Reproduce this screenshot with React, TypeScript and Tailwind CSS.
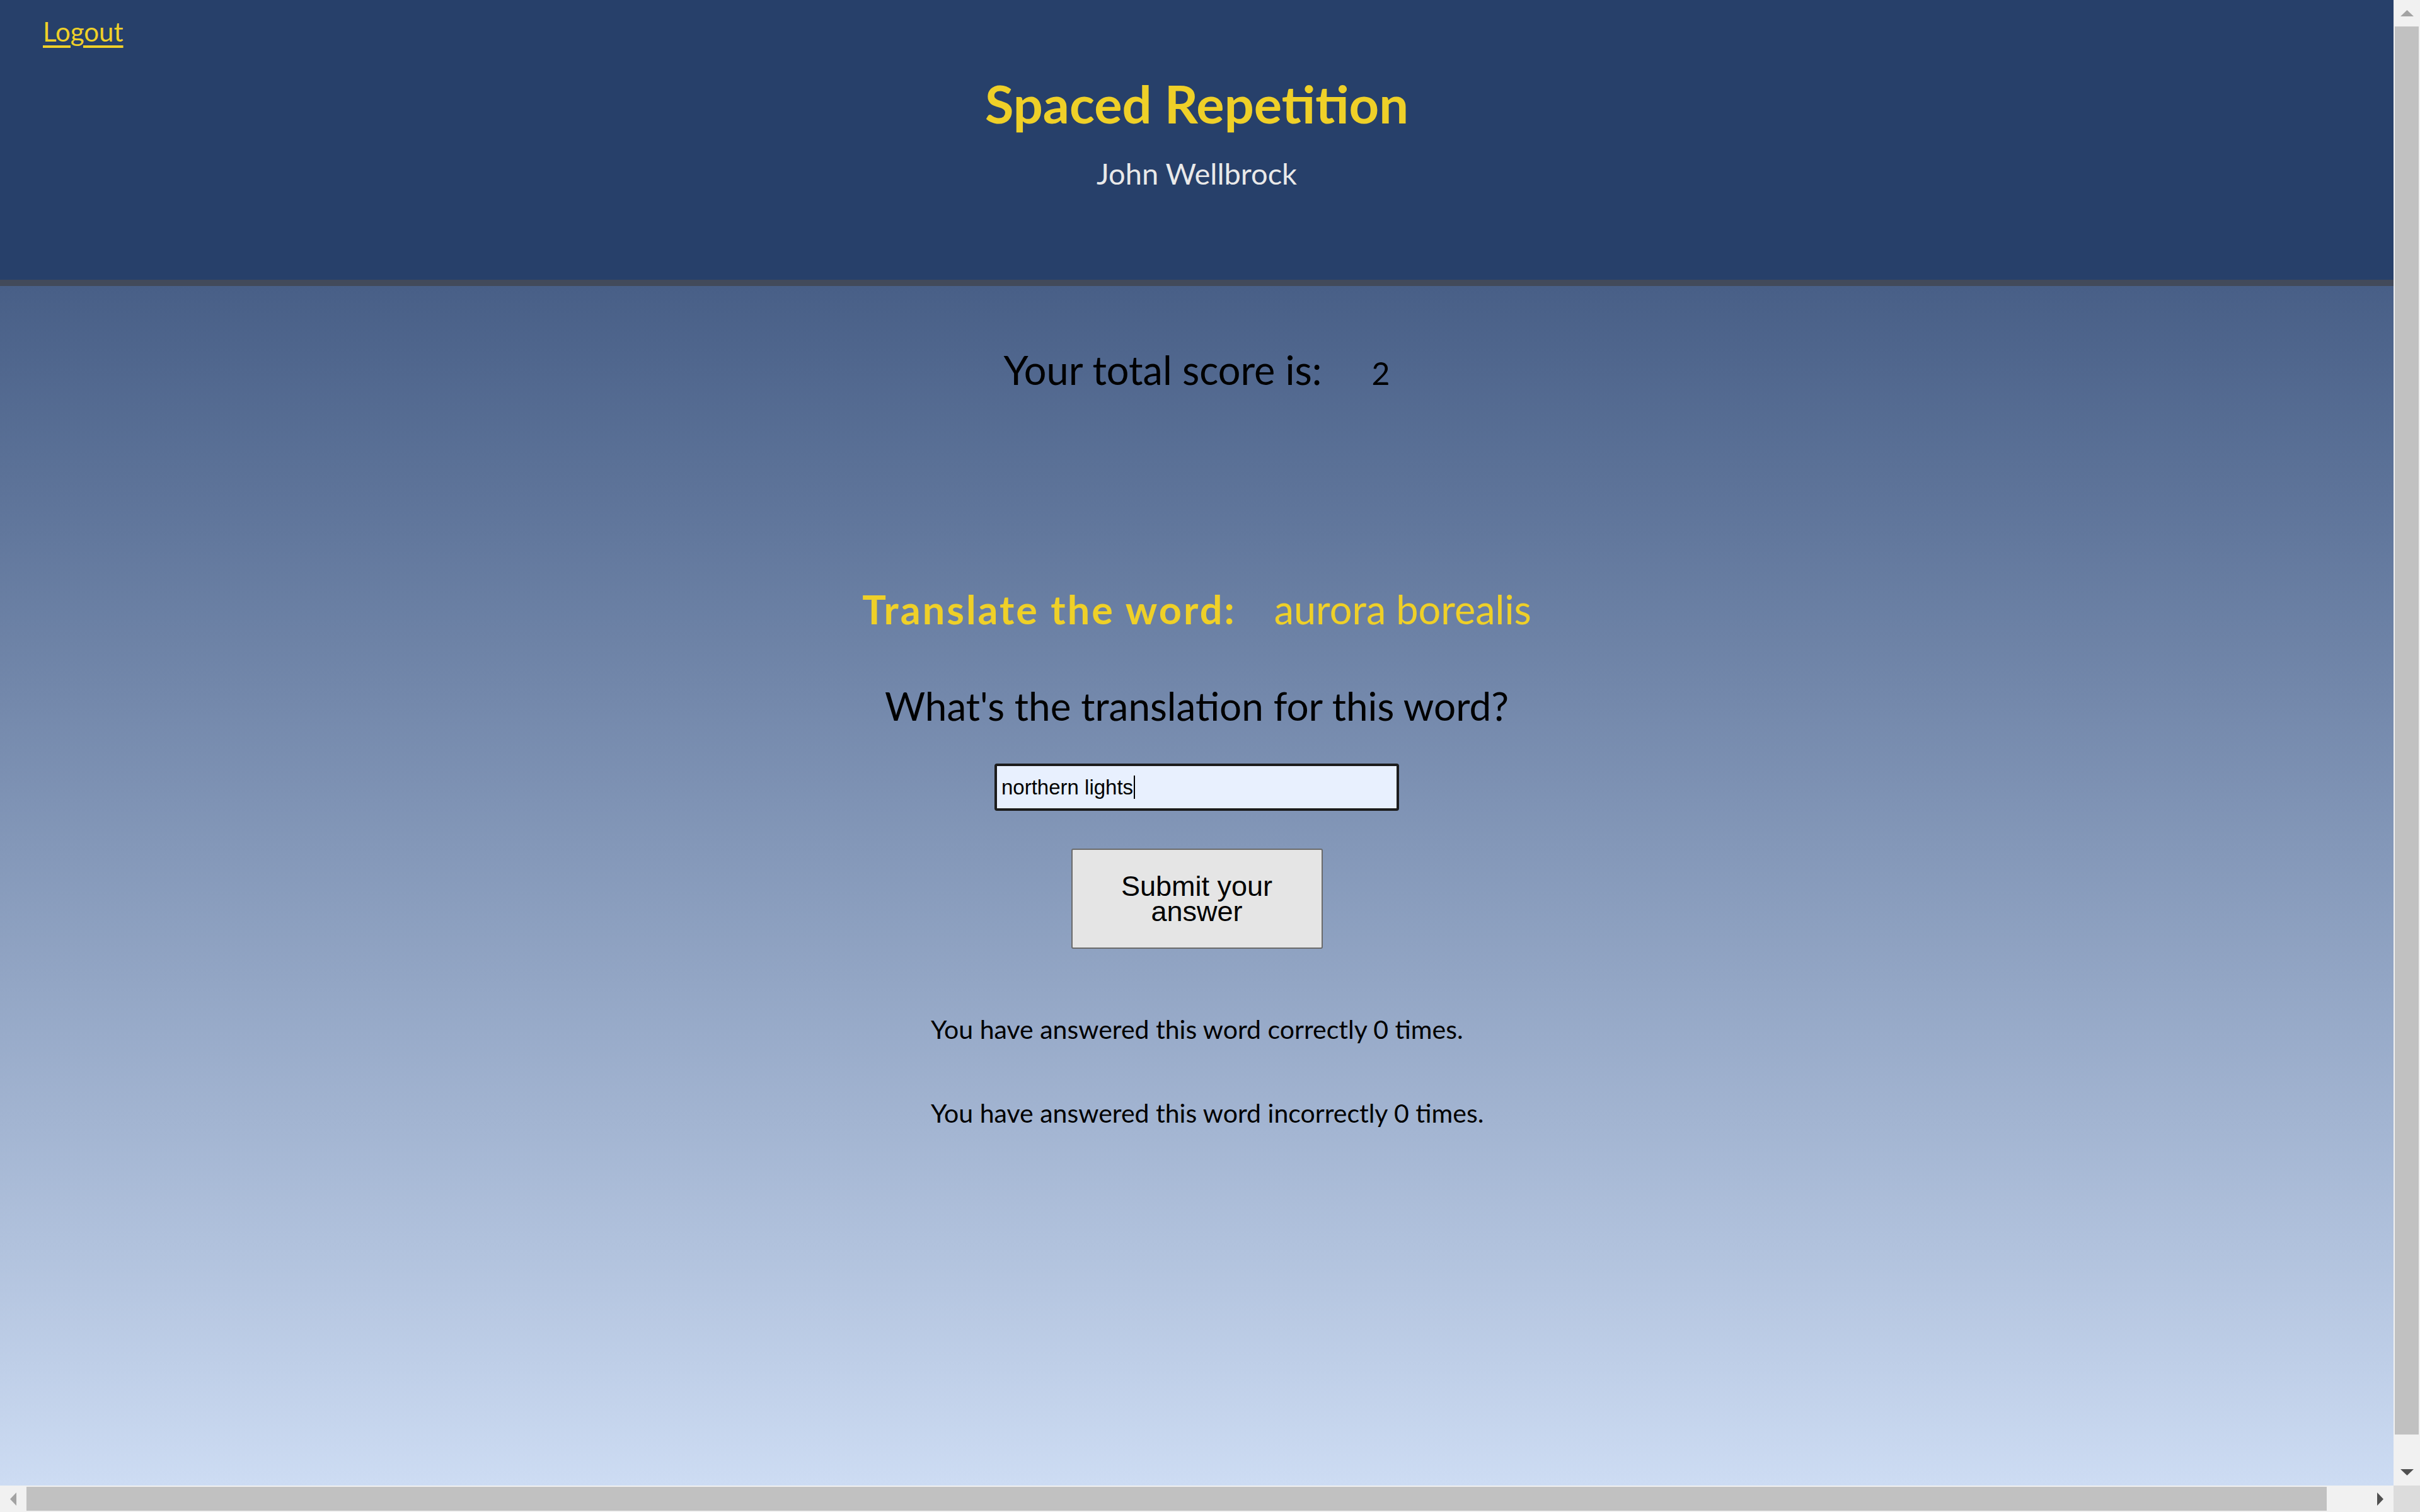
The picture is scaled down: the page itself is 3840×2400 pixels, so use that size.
import React from "react";

type Dir = "up" | "down" | "left" | "right";

const Arrow = ({ dir, color }: { dir: Dir; color: string }) => {
  const points: Record<Dir, string> = {
    up: "0,10 10.5,0 21,10",
    down: "0,0 21,0 10.5,10",
    left: "10,0 10,21 0,10.5",
    right: "0,0 10,10.5 0,21",
  };
  const vertical = dir === "up" || dir === "down";
  return (
    <svg
      width={vertical ? 21 : 10}
      height={vertical ? 10 : 21}
      viewBox={vertical ? "0 0 21 10" : "0 0 10 21"}
    >
      <polygon points={points[dir]} fill={color} />
    </svg>
  );
};

const VerticalScrollbar = () => (
  <div className="flex w-[42px] shrink-0 flex-col items-center bg-[#f1f1f1]">
    <div className="flex h-[42px] w-full shrink-0 items-center justify-center">
      <Arrow dir="up" color="#a3a3a3" />
    </div>
    <div className="h-[2235px] w-[38px] shrink-0 bg-[#c1c1c1]" />
    <div className="flex-1" />
    <div className="flex h-[42px] w-full shrink-0 items-center justify-center">
      <Arrow dir="down" color="#505050" />
    </div>
  </div>
);

const HorizontalScrollbar = () => (
  <div className="flex h-[42px] shrink-0">
    <div className="flex flex-1 items-center bg-[#f1f1f1]">
      <div className="flex h-full w-[42px] shrink-0 items-center justify-center">
        <Arrow dir="left" color="#a3a3a3" />
      </div>
      <div className="h-[38px] w-[3650px] shrink-0 bg-[#c1c1c1]" />
      <div className="flex-1" />
      <div className="flex h-full w-[42px] shrink-0 items-center justify-center">
        <Arrow dir="right" color="#505050" />
      </div>
    </div>
    <div className="w-[42px] shrink-0 bg-[#dcdcdc]" />
  </div>
);

export default function App() {
  const word = "aurora borealis";
  const answer = "northern lights";
  const score = 2;
  const correct = 0;
  const incorrect = 0;

  return (
    <div className="flex h-[2400px] w-[3840px] flex-col overflow-hidden [font-family:Lato,sans-serif]">
      <div className="flex min-h-0 flex-1">
        <div className="flex min-w-0 flex-1 flex-col">
          <header className="h-[454px] shrink-0 border-b-[10px] border-[#424a5a] bg-[#27406a]">
            <div className="pl-[68px] pt-[29px] text-[42px] leading-none">
              <a href="#" className="text-[#efd028] underline underline-offset-[6px]">
                Logout
              </a>
            </div>
            <h1 className="mt-[52px] text-center text-[83px] font-bold leading-none text-[#efd028]">
              Spaced Repetition
            </h1>
            <p className="mt-[46px] text-center text-[47px] leading-none text-[#e9e9e9]">
              John Wellbrock
            </p>
          </header>

          <main className="flex flex-1 flex-col bg-linear-to-b from-[#485f87] to-[#cddcf3] text-black">
            <div className="mt-[101px] flex items-baseline justify-center gap-[79px] leading-none">
              <span className="text-[63px]">Your total score is:</span>
              <span className="text-[50px]">{score}</span>
            </div>

            <div className="mt-[317px] flex items-baseline justify-center gap-[60px] text-[63px] leading-none text-[#efd028]">
              <span className="font-bold tracking-[3px]">Translate the word:</span>
              <span>{word}</span>
            </div>

            <p className="mt-[91px] text-center text-[62px] leading-none">
              What's the translation for this word?
            </p>

            <div className="mx-auto mt-[61px] flex h-[75px] w-[642px] items-center rounded-[4px] border-[4px] border-[#1c1c1c] bg-[#e8f0fe] pl-[7px] text-[33px] leading-none text-black [font-family:Liberation_Sans,Arial,sans-serif]">
              <span>{answer}</span>
              <span className="ml-[1px] h-[37px] w-[2px] bg-black" />
            </div>

            <button
              type="button"
              className="mx-auto mt-[60px] h-[159px] w-[399px] rounded-[3px] border-2 border-[#6b6b6b] bg-[#e5e5e5] px-[36px] text-[45px] leading-[40px] text-black [font-family:Liberation_Sans,Arial,sans-serif]"
            >
              Submit your answer
            </button>

            <div className="mt-[107px] flex justify-center pl-[38px]">
              <div className="flex w-[882px] flex-col gap-[92px] whitespace-nowrap text-[41px] leading-none">
                <p>You have answered this word correctly {correct} times.</p>
                <p>You have answered this word incorrectly {incorrect} times.</p>
              </div>
            </div>
          </main>
        </div>
        <VerticalScrollbar />
      </div>
      <HorizontalScrollbar />
    </div>
  );
}
